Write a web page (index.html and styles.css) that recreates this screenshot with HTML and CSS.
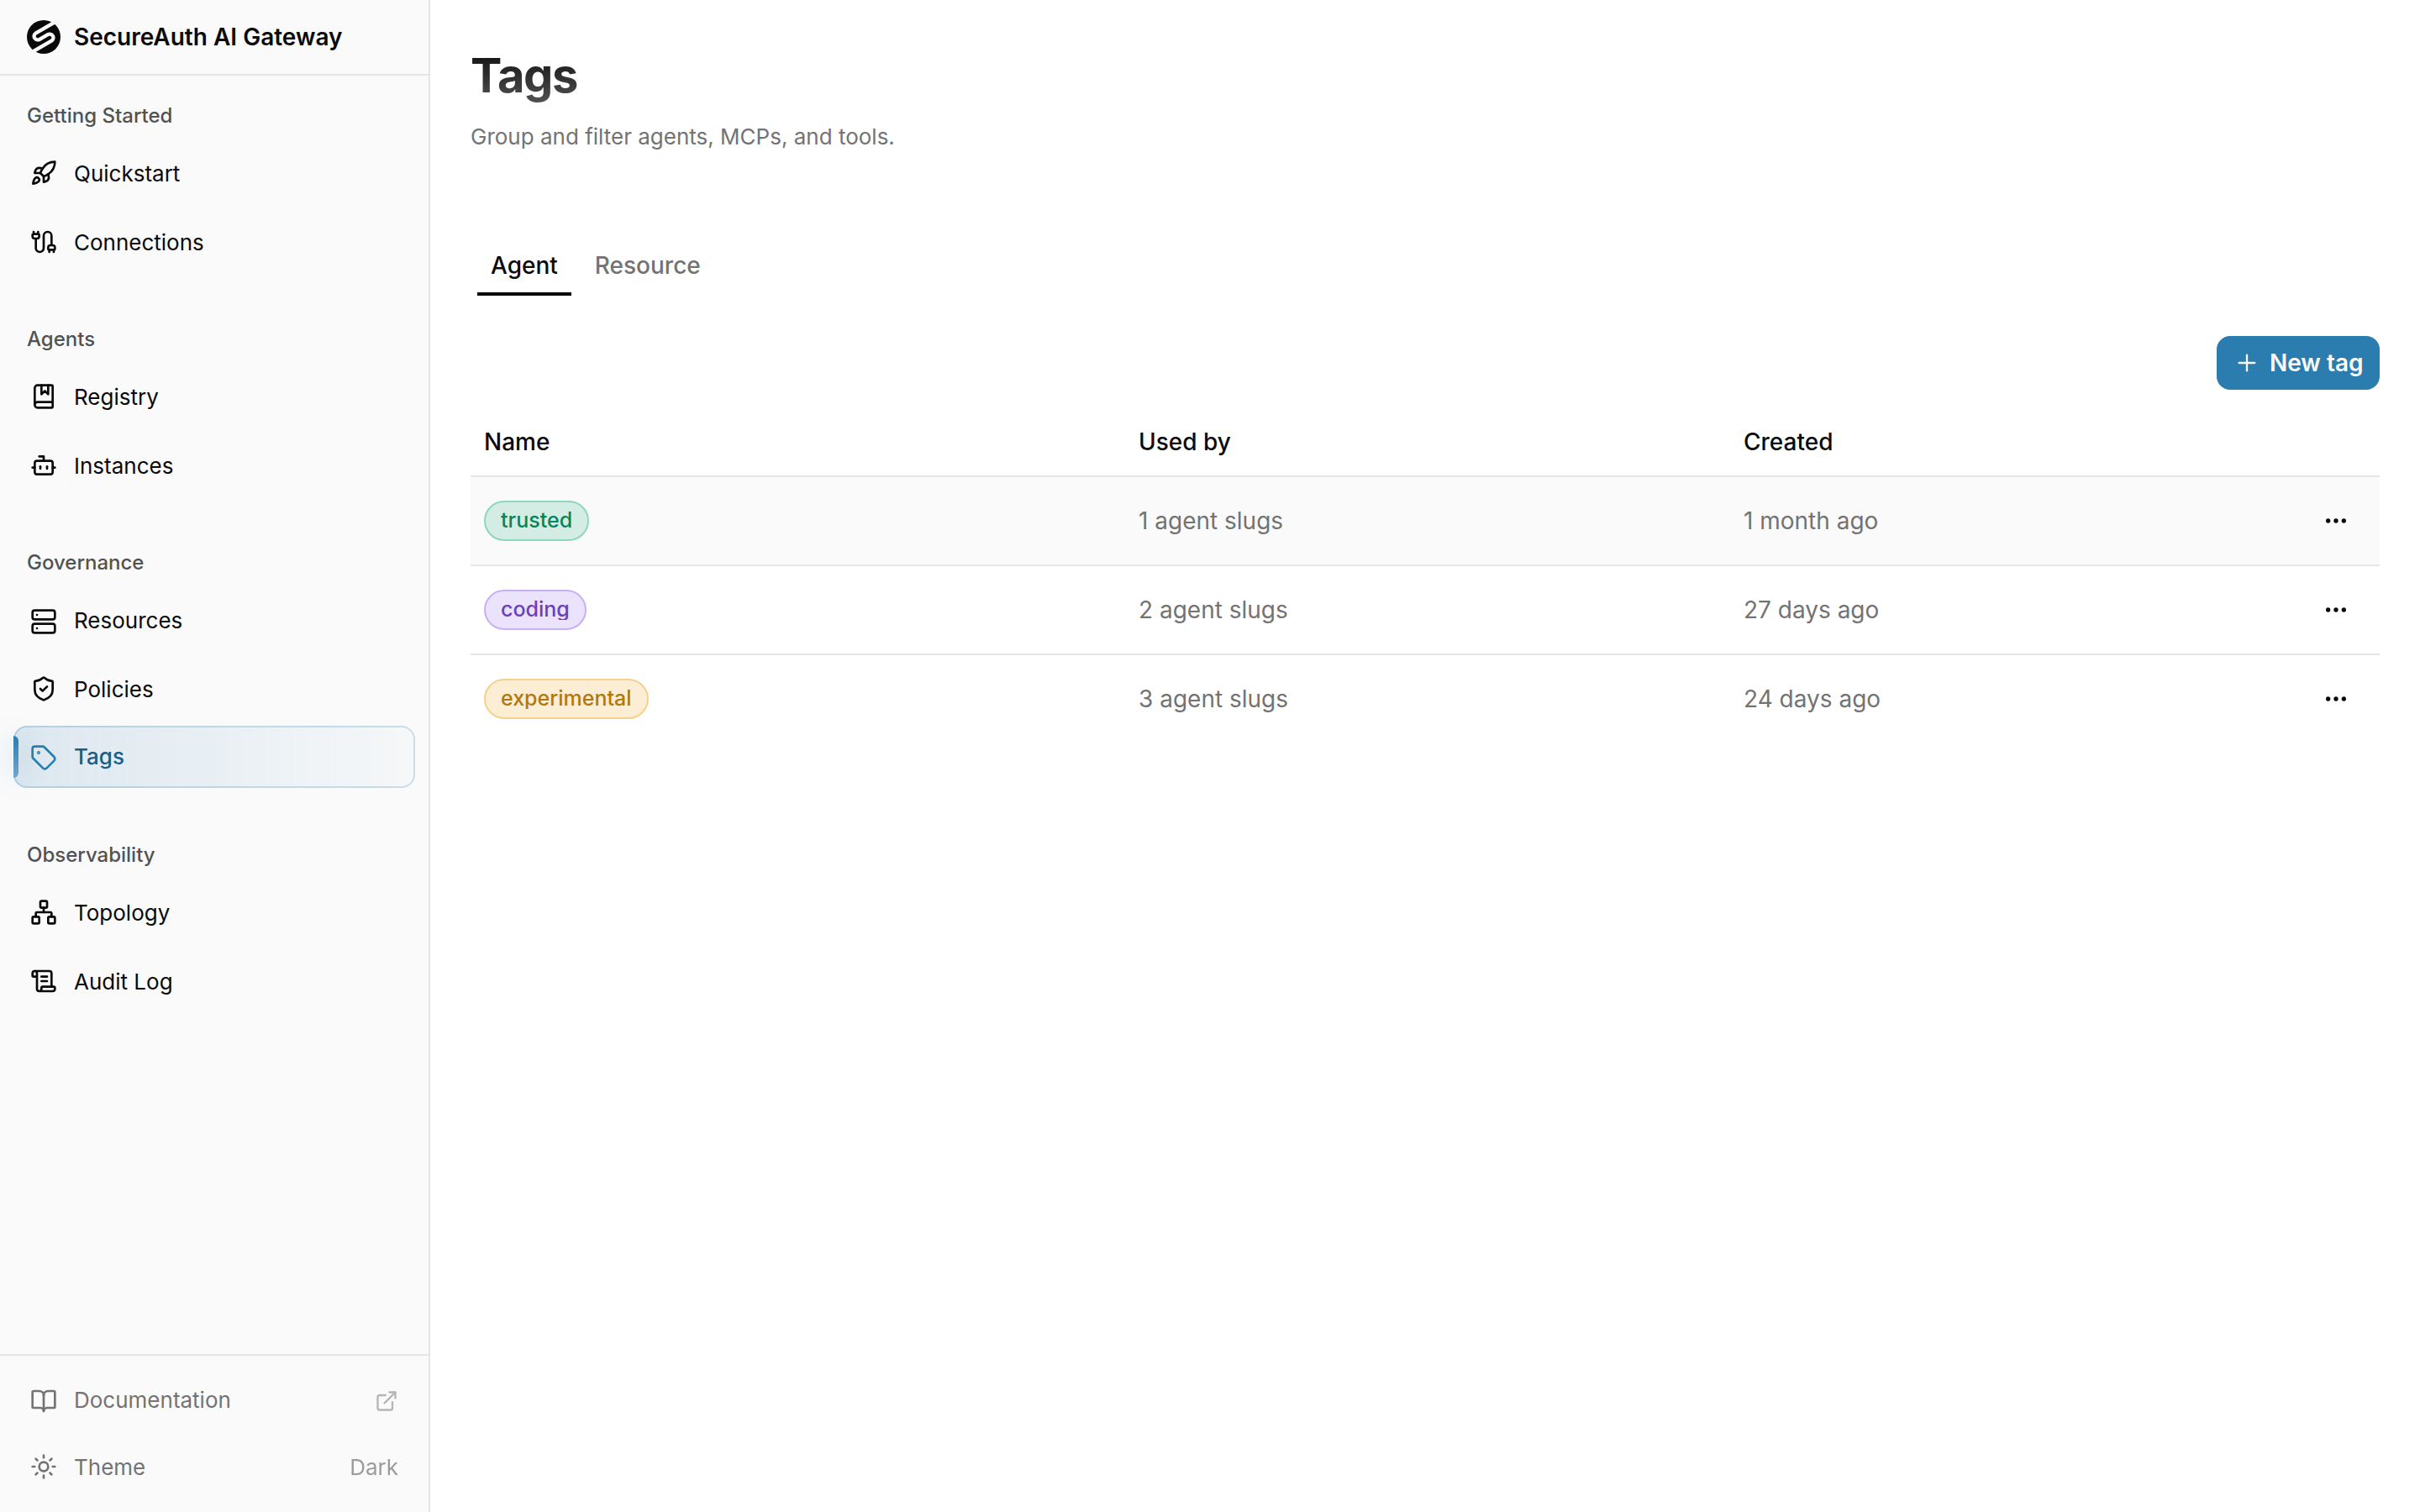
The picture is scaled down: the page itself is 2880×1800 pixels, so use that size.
FILE: index.html
```html
<!DOCTYPE html>
<html lang="en">
<head>
<meta charset="utf-8">
<title>Tags - SecureAuth AI Gateway</title>
<link rel="stylesheet" href="styles.css">
</head>
<body>
<div class="app">
  <aside class="sidebar">
    <header class="brand">
      <svg class="brand-logo" viewBox="-60 -60 120 120">
        <circle r="60" fill="#0a0a0a"/>
        <path transform="rotate(-30)" d="M64-26H-17a13 13 0 0 0 0 26H17a13 13 0 0 1 0 26H-64" fill="none" stroke="#fafafa" stroke-width="13"/>
      </svg>
      <span class="brand-name">SecureAuth AI Gateway</span>
    </header>

    <nav class="nav">
      <section class="group">
        <h2 class="group-label">Getting Started</h2>
        <a class="item">
          <svg class="icon" viewBox="0 0 24 24"><path d="M4.5 16.5c-1.5 1.26-2 5-2 5s3.74-.5 5-2c.71-.84.7-2.13-.09-2.91a2.18 2.18 0 0 0-2.91-.09z"/><path d="m12 15-3-3a22 22 0 0 1 2-3.95A12.88 12.88 0 0 1 22 2c0 2.72-.78 7.5-6 11a22.35 22.35 0 0 1-4 2z"/><path d="M9 12H4s.55-3.03 2-4c1.62-1.08 5 0 5 0"/><path d="M12 15v5s3.03-.55 4-2c1.08-1.62 0-5 0-5"/></svg>
          <span>Quickstart</span>
        </a>
        <a class="item">
          <svg class="icon" viewBox="0 0 24 24"><path d="M17 21v-2a1 1 0 0 1-1-1v-1a2 2 0 0 1 2-2h2a2 2 0 0 1 2 2v1a1 1 0 0 1-1 1"/><path d="M19 15V6.5a1 1 0 0 0-7 0v11a1 1 0 0 1-7 0V9"/><path d="M21 21v-2h-4"/><path d="M3 5h4V3"/><path d="M7 5a1 1 0 0 1 1 1v1a2 2 0 0 1-2 2H4a2 2 0 0 1-2-2V6a1 1 0 0 1 1-1V3"/></svg>
          <span>Connections</span>
        </a>
      </section>

      <section class="group">
        <h2 class="group-label">Agents</h2>
        <a class="item">
          <svg class="icon" viewBox="0 0 24 24"><path d="M10 2v8l3-3 3 3V2" /><path d="M4 19.5v-15A2.5 2.5 0 0 1 6.5 2H19a1 1 0 0 1 1 1v18a1 1 0 0 1-1 1H6.5a1 1 0 0 1 0-5H20"/></svg>
          <span>Registry</span>
        </a>
        <a class="item">
          <svg class="icon" viewBox="0 0 24 24"><path d="M12 8V4H8"/><rect width="16" height="12" x="4" y="8" rx="2"/><path d="M2 14h2"/><path d="M20 14h2"/><path d="M15 13v2"/><path d="M9 13v2"/></svg>
          <span>Instances</span>
        </a>
      </section>

      <section class="group">
        <h2 class="group-label">Governance</h2>
        <a class="item">
          <svg class="icon icon-low" viewBox="0 0 24 24"><rect width="20" height="8" x="2" y="2" rx="2"/><rect width="20" height="8" x="2" y="14" rx="2"/><path d="M6 6h.01"/><path d="M6 18h.01"/></svg>
          <span>Resources</span>
        </a>
        <a class="item">
          <svg class="icon" viewBox="0 0 24 24"><path d="M20 13c0 5-3.5 7.5-7.66 8.95a1 1 0 0 1-.67-.01C7.5 20.5 4 18 4 13V6a1 1 0 0 1 1-1c2 0 4.5-1.2 6.24-2.72a1.17 1.17 0 0 1 1.52 0C14.51 3.81 17 5 19 5a1 1 0 0 1 1 1z"/><path d="m9 12 2 2 4-4"/></svg>
          <span>Policies</span>
        </a>
        <a class="item item-active">
          <svg class="icon" viewBox="0 0 24 24"><path d="M12.586 2.586A2 2 0 0 0 11.172 2H4a2 2 0 0 0-2 2v7.172a2 2 0 0 0 .586 1.414l8.704 8.704a2.426 2.426 0 0 0 3.42 0l6.58-6.58a2.426 2.426 0 0 0 0-3.42z"/><circle cx="7.5" cy="7.5" r=".5" fill="currentColor"/></svg>
          <span>Tags</span>
        </a>
      </section>

      <section class="group">
        <h2 class="group-label">Observability</h2>
        <a class="item">
          <svg class="icon" viewBox="0 0 24 24"><rect x="16" y="16" width="6" height="6" rx="1"/><rect x="2" y="16" width="6" height="6" rx="1"/><rect x="9" y="2" width="6" height="6" rx="1"/><path d="M5 16v-3a1 1 0 0 1 1-1h12a1 1 0 0 1 1 1v3"/><path d="M12 12V8"/></svg>
          <span>Topology</span>
        </a>
        <a class="item">
          <svg class="icon" viewBox="0 0 24 24"><path d="M15 12h-5"/><path d="M15 8h-5"/><path d="M19 17V5a2 2 0 0 0-2-2H4"/><path d="M8 21h12a2 2 0 0 0 2-2v-1a1 1 0 0 0-1-1H11a1 1 0 0 0-1 1v1a2 2 0 1 1-4 0V5a2 2 0 1 0-4 0v2a1 1 0 0 0 1 1h3"/></svg>
          <span>Audit Log</span>
        </a>
      </section>
    </nav>

    <footer class="sidebar-footer">
      <a class="item item-muted">
        <svg class="icon icon-low" viewBox="0 0 24 24"><path d="M12 7v14"/><path d="M3 18a1 1 0 0 1-1-1V4a1 1 0 0 1 1-1h5a4 4 0 0 1 4 4 4 4 0 0 1 4-4h5a1 1 0 0 1 1 1v13a1 1 0 0 1-1 1h-6a3 3 0 0 0-3 3 3 3 0 0 0-3-3z"/></svg>
        <span>Documentation</span>
        <svg class="icon icon-external" viewBox="0 0 24 24"><path d="M15 3h6v6"/><path d="M10 14 21 3"/><path d="M18 13v6a2 2 0 0 1-2 2H5a2 2 0 0 1-2-2V8a2 2 0 0 1 2-2h6"/></svg>
      </a>
      <a class="item item-muted">
        <svg class="icon" viewBox="0 0 24 24"><circle cx="12" cy="12" r="4"/><path d="M12 2v2"/><path d="M12 20v2"/><path d="m4.93 4.93 1.41 1.41"/><path d="m17.66 17.66 1.41 1.41"/><path d="M2 12h2"/><path d="M20 12h2"/><path d="m6.34 17.66-1.41 1.41"/><path d="m19.07 4.93-1.41 1.41"/></svg>
        <span>Theme</span>
        <span class="item-value">Dark</span>
      </a>
    </footer>
  </aside>

  <main class="main">
    <h1 class="title">Tags</h1>
    <p class="subtitle">Group and filter agents, MCPs, and tools.</p>

    <div class="tabs">
      <a class="tab tab-active">Agent</a>
      <a class="tab">Resource</a>
    </div>

    <div class="toolbar">
      <button class="button">
        <svg class="icon icon-plus" viewBox="0 0 24 24"><path d="M5 12h14"/><path d="M12 5v14"/></svg>
        <span>New tag</span>
      </button>
    </div>

    <table class="table">
      <colgroup><col class="col-name"><col class="col-used"><col class="col-created"><col class="col-actions"></colgroup>
      <thead>
        <tr><th>Name</th><th>Used by</th><th>Created</th><th></th></tr>
      </thead>
      <tbody>
        <tr class="row-hover">
          <td><span class="pill pill-green"><span class="pill-text">trusted</span></span></td>
          <td>1 agent slugs</td>
          <td>1 month ago</td>
          <td class="actions"><svg class="icon" viewBox="0 0 24 24"><circle cx="12" cy="12" r="1"/><circle cx="19" cy="12" r="1"/><circle cx="5" cy="12" r="1"/></svg></td>
        </tr>
        <tr>
          <td><span class="pill pill-violet"><span class="pill-text">coding</span></span></td>
          <td>2 agent slugs</td>
          <td>27 days ago</td>
          <td class="actions"><svg class="icon" viewBox="0 0 24 24"><circle cx="12" cy="12" r="1"/><circle cx="19" cy="12" r="1"/><circle cx="5" cy="12" r="1"/></svg></td>
        </tr>
        <tr>
          <td><span class="pill pill-amber"><span class="pill-text">experimental</span></span></td>
          <td>3 agent slugs</td>
          <td>24 days ago</td>
          <td class="actions"><svg class="icon" viewBox="0 0 24 24"><circle cx="12" cy="12" r="1"/><circle cx="19" cy="12" r="1"/><circle cx="5" cy="12" r="1"/></svg></td>
        </tr>
      </tbody>
    </table>
  </main>
</div>
</body>
</html>
```
FILE: styles.css
```css
* {
  box-sizing: border-box;
}

body {
  margin: 0;
  background: #fff;
  color: #0a0a0a;
  font: 400 28px/40px Inter, sans-serif;
}

.app {
  display: flex;
  height: 1800px;
}

/* Icons */
.icon {
  flex: none;
  width: 32px;
  height: 32px;
  fill: none;
  stroke: currentColor;
  stroke-width: 2;
  stroke-linecap: round;
  stroke-linejoin: round;
}

/* Sidebar */
.sidebar {
  display: flex;
  flex: none;
  flex-direction: column;
  width: 512px;
  border-right: 2px solid #e5e5e5;
  background: #fafafa;
}

.brand {
  display: flex;
  align-items: center;
  gap: 16px;
  height: 90px;
  padding: 0 32px;
  border-bottom: 2px solid #e5e5e5;
}

.brand-logo {
  width: 40px;
  height: 40px;
}

.brand-name {
  font-weight: 600;
}

.nav {
  display: flex;
  flex: 1;
  flex-direction: column;
  gap: 46px;
  padding: 16px 16px 0;
}

.group {
  display: flex;
  flex-direction: column;
  gap: 8px;
}

.group-label {
  height: 64px;
  margin: 0 0 -8px;
  padding: 0 16px;
  color: #525252;
  font-size: 24px;
  font-weight: 500;
  line-height: 64px;
}

.item {
  display: flex;
  position: relative;
  align-items: center;
  gap: 20px;
  height: 74px;
  padding: 0 18px;
  border: 2px solid transparent;
  border-radius: 16px;
  font-size: 26px;
}

.item .icon {
  margin-bottom: 2px;
}

.item .icon-low {
  margin-bottom: -2px;
}

.item-active {
  margin: -2px 0 2px;
  border-color: rgba(43, 125, 176, 0.22);
  background: linear-gradient(90deg, rgba(43, 125, 176, 0.14), rgba(43, 125, 176, 0.02)) border-box;
  color: #1b5e87;
  font-weight: 500;
}

.item-active .icon {
  margin-bottom: -1px;
  color: #2b7db0;
}

/* Accent bar on the edge of the current item */
.item-active::before {
  position: absolute;
  top: 10px;
  bottom: 10px;
  left: -2px;
  width: 6px;
  border-radius: 0 6px 6px 0;
  background: linear-gradient(#2b7db0, #72a6cc);
  box-shadow: 0 0 32px rgba(43, 125, 176, 0.4);
  content: "";
}

.sidebar-footer {
  display: flex;
  flex-direction: column;
  gap: 6px;
  height: 188px;
  padding: 16px 16px 0;
  border-top: 2px solid #e5e5e5;
}

.item-muted {
  color: #737373;
}

.item .icon-external {
  width: 28px;
  height: 28px;
  margin-bottom: -2px;
  margin-left: auto;
  opacity: 0.5;
}

.item-value {
  margin-left: auto;
  opacity: 0.7;
}

/* Main column */
.main {
  flex: 1;
  padding: 55px 48px 0;
}

.title {
  width: max-content;
  margin: 0;
  background: linear-gradient(#0a0a0a, #545454);
  background-clip: text;
  color: transparent;
  font-size: 56px;
  font-weight: 700;
  line-height: 70px;
  letter-spacing: -0.025em;
}

.subtitle {
  margin: 18px 0 0;
  color: #737373;
  font-size: 26px;
}

.tabs {
  display: flex;
  gap: 12px;
  margin-top: 97px;
  padding: 0 8px;
}

.tab {
  height: 72px;
  padding: 0 16px;
  border-bottom: 4px solid transparent;
  color: #737373;
  font-weight: 500;
  line-height: 72px;
}

.tab-active {
  border-color: #0a0a0a;
  color: #0a0a0a;
}

.toolbar {
  display: flex;
  justify-content: flex-end;
  margin-top: 48px;
}

.button {
  display: flex;
  align-items: center;
  gap: 11px;
  height: 64px;
  padding: 0 19.5px 0 20px;
  border: 0;
  border-radius: 16px;
  background: #2b7db0;
  color: #fafafa;
  font: 600 28px/40px Inter, sans-serif;
}

.icon-plus {
  stroke-width: 1.75;
}

/* Table */
.table {
  width: 100%;
  margin-top: 22px;
  border-spacing: 0;
  table-layout: fixed;
}

.col-name {
  width: 779px;
}

.col-used {
  width: 720px;
}

.col-created {
  width: 657px;
}

.table th,
.table td {
  padding: 0 16px;
  border-bottom: 2px solid #e5e5e5;
  text-align: left;
  vertical-align: middle;
}

.table th {
  height: 82px;
  font-weight: 500;
}

.table td {
  height: 106px;
  color: #737373;
}

.table tbody tr:last-child td {
  border-bottom-color: transparent;
}

.row-hover td {
  background: #fafafa;
}

.table .actions {
  padding-right: 36px;
  color: #0a0a0a;
}

.actions .icon {
  display: block;
  margin-left: auto;
}

.pill {
  display: flex;
  align-items: center;
  width: max-content;
  height: 48px;
  padding: 0 18px;
  border: 2px solid;
  border-radius: 24px;
  font-size: 25px;
  font-weight: 500;
  line-height: 24px;
}

.pill-text {
  overflow: hidden;
  margin-bottom: 1px;
  padding-bottom: 1px;
}

.table .pill-green {
  border-color: #8fd6bf;
  background: #d3ede4;
  color: #07855b;
}

.table .pill-violet {
  border-color: #c9b0f5;
  background: #ebe3fc;
  color: #6b40b8;
}

.table .pill-amber {
  border-color: #f4d28c;
  background: #fceed4;
  color: #b0780e;
}
```
